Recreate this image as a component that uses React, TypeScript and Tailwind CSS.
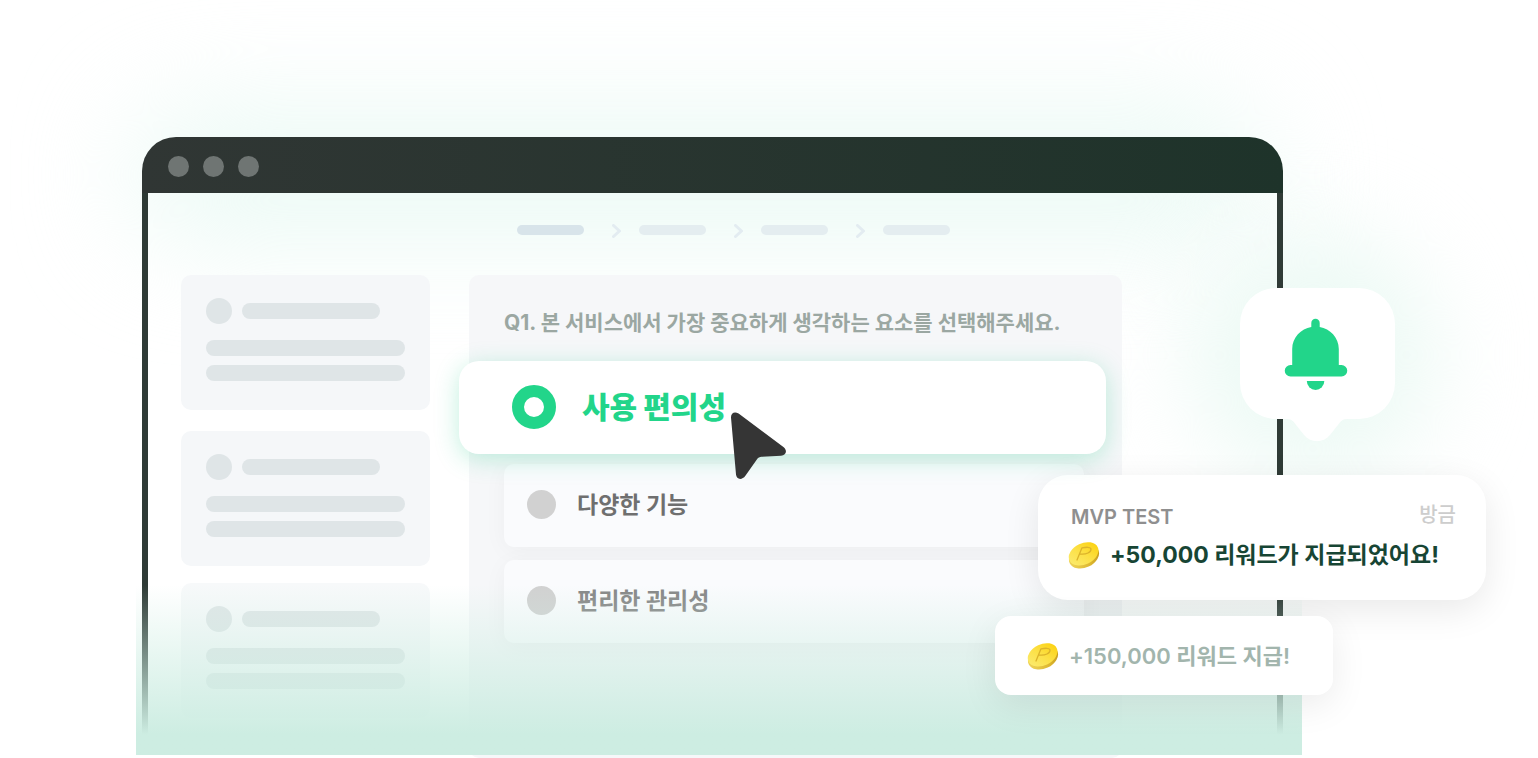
import React, { useState } from 'react';

const options = ['사용 편의성', '다양한 기능', '편리한 관리성'];

const SkeletonCard: React.FC<{ faded?: boolean }> = ({ faded }) => {
  const bar = faded ? 'bg-[#d3dcde]' : 'bg-[#dfe5e7]';

  return (
    <div
      className={`rounded-[10px] bg-[#f5f7f9] px-[25px] pt-[23px] pb-[29px] ${
        faded ? 'opacity-70' : ''
      }`}
    >
      <div className="flex items-center gap-2.5">
        <div className={`size-[26px] rounded-full ${bar}`} />
        <div className={`h-4 w-[138px] rounded-full ${bar}`} />
      </div>
      <div className={`mt-4 h-4 rounded-full ${bar}`} />
      <div className={`mt-[9px] h-4 rounded-full ${bar}`} />
    </div>
  );
};

const StepArrow = () => (
  <svg className="mt-[2px] mr-[18px] ml-7 h-3.5 w-[9px]" viewBox="0 0 9 14" fill="none">
    <path d="M1.5 1.5L7.5 7L1.5 12.5" stroke="#e3ecf1" strokeWidth="3" strokeLinecap="round" strokeLinejoin="round" />
  </svg>
);

const Steps = () => (
  <div className="flex items-center justify-center pt-[29px] pl-[42px]">
    <div className="h-2.5 w-[67px] rounded-full bg-[#d8e4ea]" />
    <StepArrow />
    <div className="h-2.5 w-[67px] rounded-full bg-[#e4edf0]" />
    <StepArrow />
    <div className="h-2.5 w-[67px] rounded-full bg-[#e4edf0]" />
    <StepArrow />
    <div className="h-2.5 w-[67px] rounded-full bg-[#e4edf0]" />
  </div>
);

const Cursor = () => (
  <svg className="pointer-events-none absolute top-[50px] left-[271px] h-[69px] w-[57px]" viewBox="0 0 57 69">
    <path
      d="M1 6.5C.8 2 4.6 .2 8.6 2.6L53.4 36C57.6 39.4 56.4 44.3 51 44.7L31.5 45.8C29.5 46 28.3 46.6 27.2 48L15.4 64.8C12 69.6 6.4 68.6 6 63.6Z"
      fill="#353535"
    />
  </svg>
);

const Coin = () => (
  <svg className="h-7 w-8 shrink-0" viewBox="0 0 32 28">
    <defs>
      <linearGradient id="coin-face" x1="0" y1="0.7" x2="1" y2="0.3">
        <stop offset="0" stopColor="#fbea6c" />
        <stop offset="0.5" stopColor="#fce045" />
        <stop offset="1" stopColor="#fcd211" />
      </linearGradient>
      <linearGradient id="coin-edge" x1="0" y1="0" x2="1" y2="0">
        <stop offset="0" stopColor="#eed257" />
        <stop offset="0.6" stopColor="#dcb62f" />
        <stop offset="1" stopColor="#c79c1c" />
      </linearGradient>
    </defs>
    <ellipse cx="16" cy="15.6" rx="15.8" ry="11" transform="rotate(-25 16 15.6)" fill="url(#coin-edge)" />
    <ellipse cx="15.6" cy="12.8" rx="15.6" ry="10.6" transform="rotate(-25 15.6 12.8)" fill="url(#coin-face)" />
    <path
      d="M9 19L14 6.8C17.5 6.2 22.6 5.6 23 8C23.2 11.2 18.6 13.8 11.6 13"
      fill="none"
      stroke="#dcb32a"
      strokeWidth="1.3"
      strokeLinecap="round"
      strokeLinejoin="round"
    />
  </svg>
);

const BellBubble = () => (
  <div className="absolute top-[151px] -right-[93px] flex h-[131px] w-[155px] justify-center rounded-[36px] bg-white pt-[30px] pr-1">
    <svg className="h-[73px] w-16" viewBox="0 0 64 73" fill="#22d58a">
      <path d="M27.3 5A4.2 4.2 0 0 1 35.7 5V9C46 10.8 54.8 19.5 54.8 31V47H57.5A5.7 5.7 0 0 1 57.5 58.5H6.5A5.7 5.7 0 0 1 6.5 47H8.2V31C8.2 19.5 17 10.8 27.3 9Z" />
      <path d="M22.8 63H40.3A8.75 9 0 0 1 22.8 63Z" />
    </svg>
    <svg className="absolute top-[130px] left-[46px] h-6 w-[62px]" viewBox="0 0 62 24" fill="#fff">
      <path d="M0 0H62V1C57 1 55.5 2.5 53.5 5L44 17C37 25.3 25 25.3 18 17L8.5 5C6.5 2.5 5 1 0 1Z" />
    </svg>
  </div>
);

const Notifications = () => (
  <div className="absolute top-[338px] -right-[184px] flex flex-col items-end gap-4">
    <div className="flex h-[125px] w-[448px] flex-col rounded-[30px] bg-white px-[30px] pt-[26px] shadow-[0_10px_36px_rgba(0,0,0,0.09)]">
      <div className="flex h-8 items-center justify-between pl-[3px]">
        <span className="text-[20px] leading-8 font-semibold text-[#8f8f8f]">MVP TEST</span>
        <span className="pb-1 text-[20px] leading-7 font-medium text-[#cdcdcd]">방금</span>
      </div>
      <div className="mt-1 flex h-9 items-center gap-[10px] text-[#174534]">
        <Coin />
        <p className="text-[23px] leading-8 font-bold whitespace-nowrap">+50,000 리워드가 지급되었어요!</p>
      </div>
    </div>
    <div className="mr-[153px] flex h-[79px] w-[338px] items-center gap-[10px] rounded-[16px] bg-white pl-8 shadow-[0_10px_36px_rgba(0,0,0,0.08)]">
      <Coin />
      <p className="text-[22px] leading-8 font-semibold whitespace-nowrap text-[#a2b5ad]">
        +150,000 리워드 지급!
      </p>
    </div>
  </div>
);

const App: React.FC = () => {
  const [selected, setSelected] = useState(0);

  return (
    <main className="relative min-h-screen overflow-hidden bg-white pt-[137px] pr-[236px] pl-[136px] font-['Inter','Noto_Sans_CJK_KR',sans-serif]">
      {/* soft green glow behind the window */}
      <div className="absolute top-[110px] right-[270px] left-[130px] h-[130px] rounded-full bg-[#ebfaf5] blur-[54px]" />
      <div className="absolute top-[230px] right-[100px] size-[250px] rounded-full bg-[#edfaf5] blur-[44px]" />

      <div className="relative">
        <div className="mr-[19px] ml-1.5">
          <header className="flex h-14 items-center gap-3.5 rounded-t-[34px] bg-linear-to-r from-[#303634] to-[#1e332a] pt-[3px] pl-[26px]">
            <span className="size-[21px] rounded-full bg-[#6f7573]" />
            <span className="size-[21px] rounded-full bg-[#6f7573]" />
            <span className="size-[21px] rounded-full bg-[#6f7573]" />
          </header>

          <div className="border-x-[6px] border-[#2f3b36]">
            <Steps />

            <div className="flex gap-[39px] pt-[37px] pr-[155px] pl-[33px]">
              <aside className="flex w-[249px] shrink-0 flex-col gap-[17px]">
                <div className="flex flex-col gap-[21px]">
                  <SkeletonCard />
                  <SkeletonCard />
                </div>
                <SkeletonCard faded />
              </aside>

              <section className="-mb-[3px] min-h-[483px] flex-1 rounded-[10px] bg-[#f6f7f9] pt-[34px] pr-[38px] pl-[35px]">
                <fieldset>
                  <legend className="h-7 text-[21px] leading-7 font-bold whitespace-nowrap text-[#9ba7a2]">
                    Q1. 본 서비스에서 가장 중요하게 생각하는 요소를 선택해주세요.
                  </legend>

                  <label className="relative z-10 mt-6 -mr-[22px] -ml-[45px] flex h-[93px] items-center gap-[26px] rounded-[20px] bg-white pb-0.5 pl-[53px] text-[30px] leading-10 font-black text-[#22d58a] shadow-[0_5px_24px_rgba(34,200,135,0.28)]">
                    <input
                      type="radio"
                      name="q1"
                      checked={selected === 0}
                      onChange={() => setSelected(0)}
                      className="size-11 appearance-none rounded-full border-[12px] border-[#22d58a] bg-white"
                    />
                    {options[0]}
                    <Cursor />
                  </label>

                  <div className="mt-2.5 flex flex-col gap-[13px]">
                    {options.slice(1).map((option, i) => (
                      <label
                        key={option}
                        className={`flex h-[83px] items-center gap-[21px] rounded-[10px] bg-[#fafbfd] pb-0.5 pl-[23px] text-[23px] leading-8 font-bold shadow-[0_4px_24px_rgba(0,0,0,0.04)] ${
                          i === 0 ? 'text-[#6f6f6f]' : 'text-[#868686]'
                        }`}
                      >
                        <input
                          type="radio"
                          name="q1"
                          checked={selected === i + 1}
                          onChange={() => setSelected(i + 1)}
                          className="size-[29px] appearance-none rounded-full bg-[#d1d1d1] checked:bg-[#22d58a]"
                        />
                        {option}
                      </label>
                    ))}
                  </div>
                </fieldset>
              </section>
            </div>
          </div>
        </div>

        {/* window dissolves into mint at the bottom */}
        <div className="pointer-events-none absolute inset-x-0 bottom-0 h-[170px] bg-linear-to-b from-[#cdede2]/0 to-[#cdede2] to-88%" />

        <BellBubble />
        <Notifications />
      </div>
    </main>
  );
};

export default App;
